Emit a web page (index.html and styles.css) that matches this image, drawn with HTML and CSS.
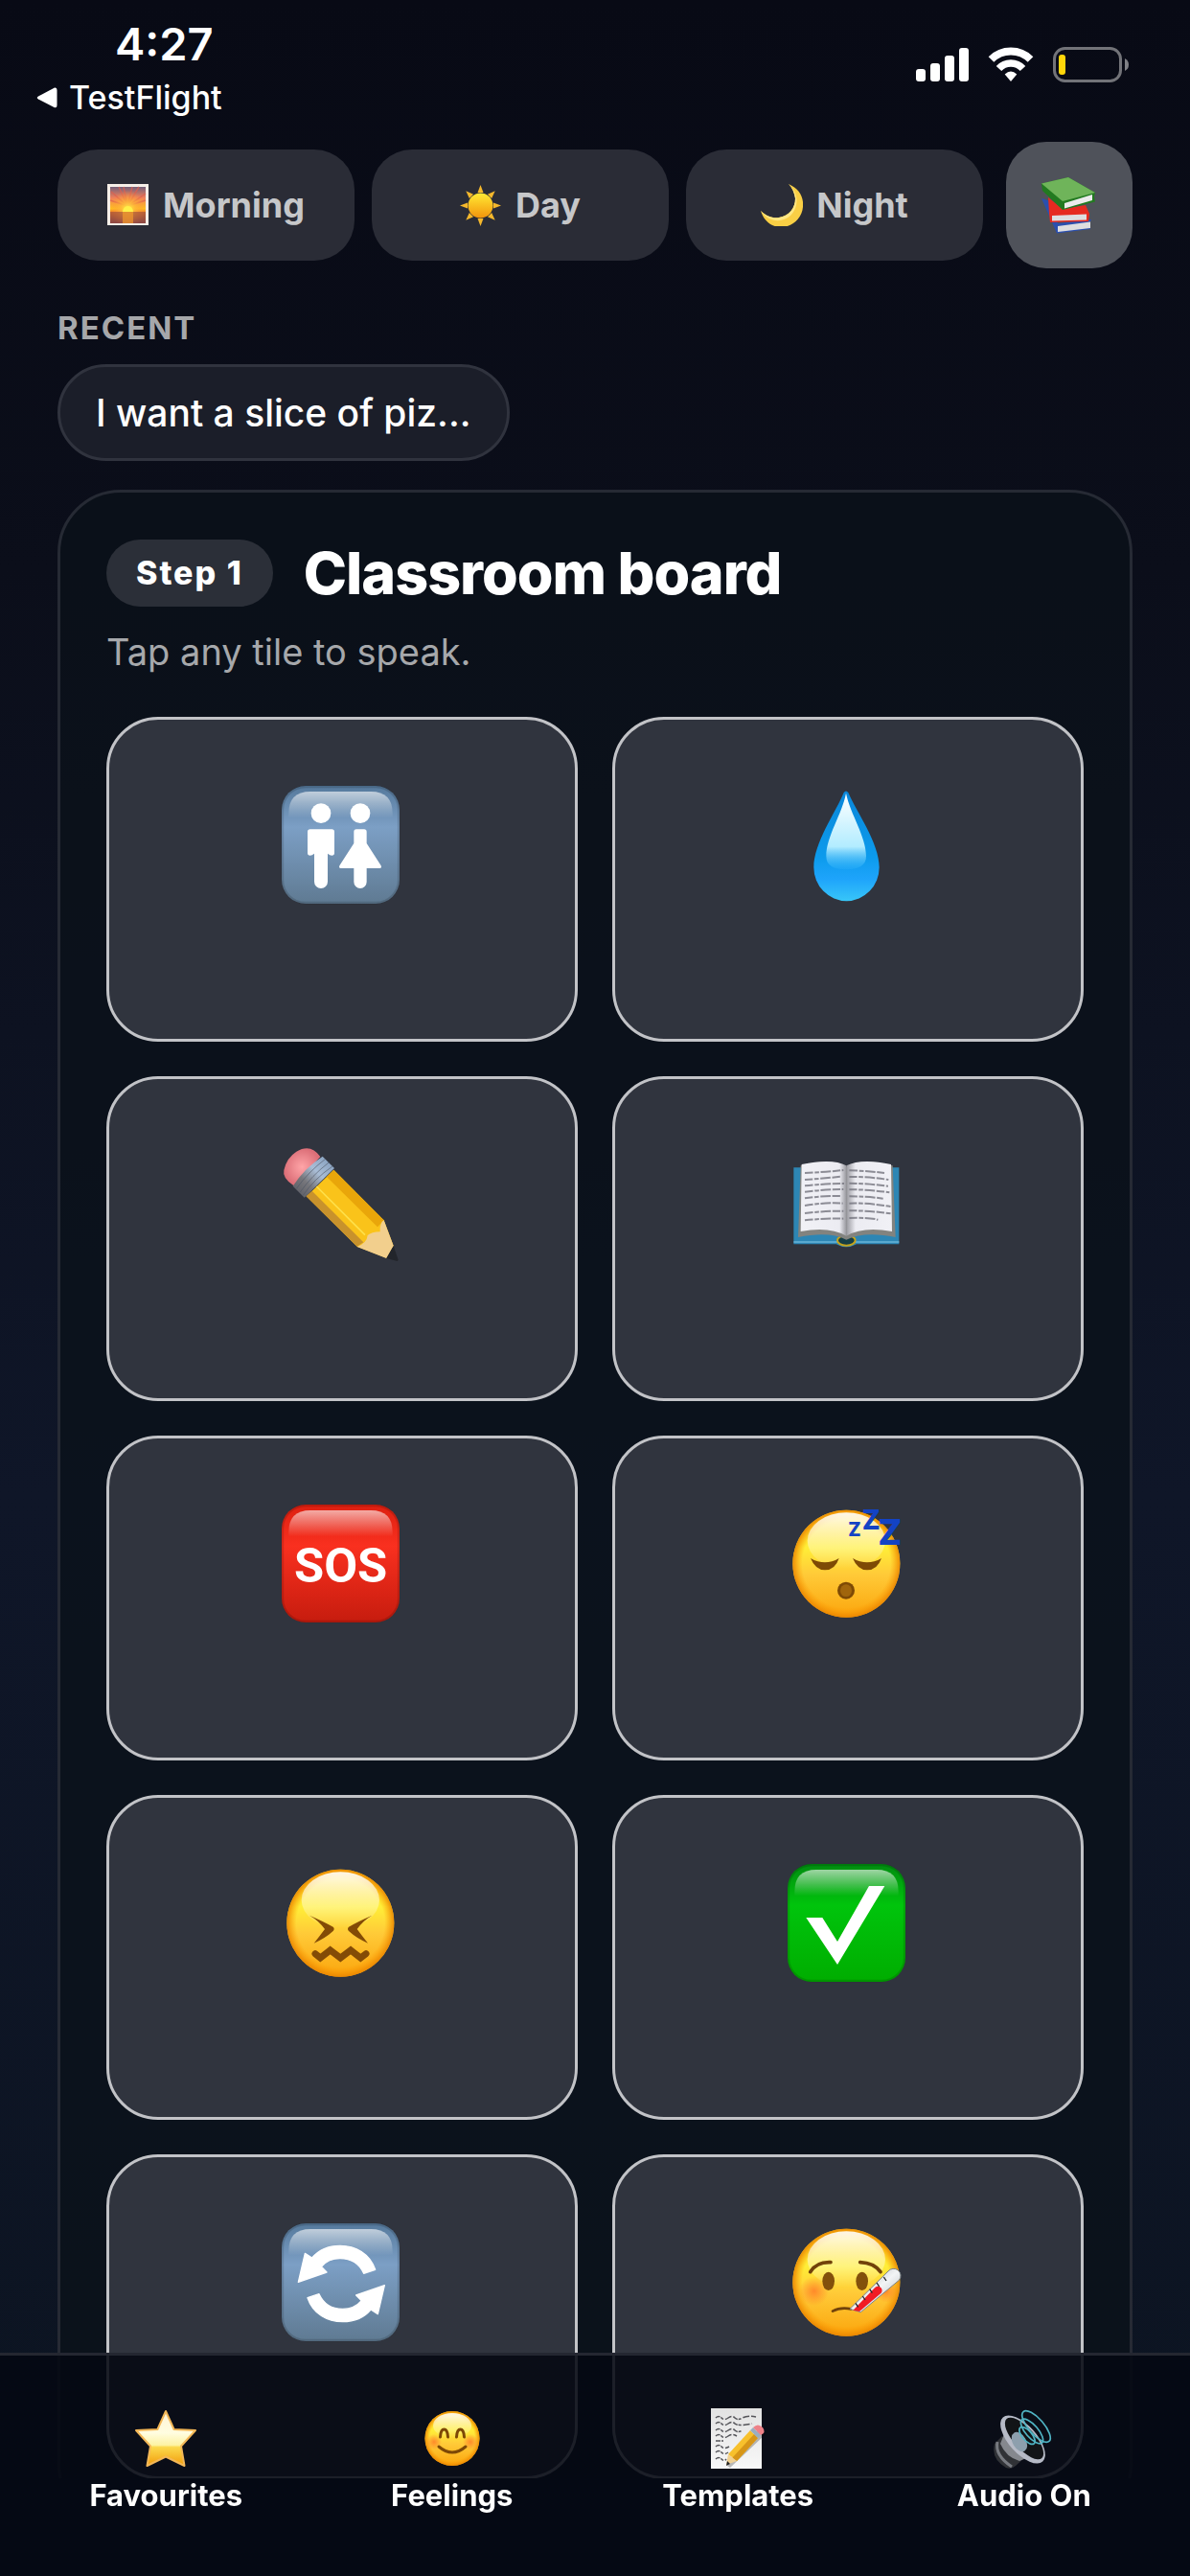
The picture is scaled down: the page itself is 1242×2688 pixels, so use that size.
FILE: index.html
```html
<!DOCTYPE html>
<html lang="en">
<head>
<meta charset="utf-8">
<meta name="viewport" content="width=device-width, initial-scale=1">
<title>Classroom board</title>
<link rel="stylesheet" href="styles.css">
</head>
<body>
<svg class="defs" width="0" height="0" aria-hidden="true">
  <defs>
    <linearGradient id="face" x1="0" y1="0" x2="0" y2="1"><stop offset="0" stop-color="#ffd21c"/><stop offset=".35" stop-color="#ffee38"/><stop offset=".6" stop-color="#ffca38"/><stop offset="1" stop-color="#fba50c"/></linearGradient>
    <radialGradient id="rim"><stop offset=".82" stop-color="#ff9a00" stop-opacity="0"/><stop offset="1" stop-color="#e98400" stop-opacity=".9"/></radialGradient>
    <linearGradient id="shine" x1="0" y1="0" x2="0" y2="1"><stop offset="0" stop-color="#fff" stop-opacity=".9"/><stop offset="1" stop-color="#fff" stop-opacity="0"/></linearGradient>
    <linearGradient id="gloss" x1="0" y1="0" x2="0" y2="1"><stop offset="0" stop-color="#fff" stop-opacity=".62"/><stop offset="1" stop-color="#fff" stop-opacity="0"/></linearGradient>
    <linearGradient id="blue" x1="0" y1="0" x2="0" y2="1"><stop offset="0" stop-color="#55799c"/><stop offset=".35" stop-color="#7c9fc5"/><stop offset="1" stop-color="#5f7a92"/></linearGradient>
    <linearGradient id="red" x1="0" y1="0" x2="0" y2="1"><stop offset="0" stop-color="#dd1f10"/><stop offset=".35" stop-color="#f9301f"/><stop offset="1" stop-color="#c61c0e"/></linearGradient>
    <linearGradient id="green" x1="0" y1="0" x2="0" y2="1"><stop offset="0" stop-color="#008c10"/><stop offset=".35" stop-color="#00c40c"/><stop offset="1" stop-color="#00ad00"/></linearGradient>
    <linearGradient id="drop" x1="0" y1="0" x2="0" y2="1"><stop offset="0" stop-color="#0a86d8"/><stop offset=".6" stop-color="#0c9bec"/><stop offset=".8" stop-color="#1ea4fb"/><stop offset="1" stop-color="#38c6f8"/></linearGradient>
    <linearGradient id="dropShine" x1="0" y1="0" x2="0" y2="1"><stop offset="0" stop-color="#fff"/><stop offset=".7" stop-color="#b2ecff"/><stop offset="1" stop-color="#2bb2fb" stop-opacity=".3"/></linearGradient>
    <linearGradient id="metal" x1="0" y1="1" x2="1" y2="0"><stop offset="0" stop-color="#55575f"/><stop offset=".35" stop-color="#77777c"/><stop offset=".6" stop-color="#a9bdd6"/><stop offset="1" stop-color="#7d98b8"/></linearGradient>
    <radialGradient id="rubber"><stop offset="0" stop-color="#ffa5a8"/><stop offset="1" stop-color="#dc6f78"/></radialGradient>
    <linearGradient id="page" x1="0" y1="0" x2="1" y2="0"><stop offset="0" stop-color="#f1f1f6"/><stop offset=".85" stop-color="#ececf2"/><stop offset="1" stop-color="#98989e"/></linearGradient>
    <linearGradient id="pageR" x1="1" y1="0" x2="0" y2="0"><stop offset="0" stop-color="#f1f1f6"/><stop offset=".8" stop-color="#ececf2"/><stop offset="1" stop-color="#98989e"/></linearGradient>
    <linearGradient id="dawn" x1="0" y1="0" x2="0" y2="1"><stop offset="0" stop-color="#74607a"/><stop offset=".3" stop-color="#f0805a"/><stop offset=".6" stop-color="#ffc21f"/><stop offset=".68" stop-color="#f08a28"/><stop offset="1" stop-color="#734653"/></linearGradient>
    <radialGradient id="glow" cy=".6"><stop offset="0" stop-color="#fff04a"/><stop offset=".4" stop-color="#ffb83a" stop-opacity=".8"/><stop offset="1" stop-color="#ff8a3a" stop-opacity="0"/></radialGradient>
    <linearGradient id="sun" x1="0" y1="0" x2="0" y2="1"><stop offset="0" stop-color="#ffea35"/><stop offset=".4" stop-color="#fbc824"/><stop offset="1" stop-color="#f2940c"/></linearGradient>
    <linearGradient id="star" x1="0" y1="0" x2="0" y2="1"><stop offset="0" stop-color="#fff3d6"/><stop offset=".4" stop-color="#fffde0"/><stop offset=".62" stop-color="#fdf3a4"/><stop offset=".66" stop-color="#fbd94c"/><stop offset="1" stop-color="#f29c0c"/></linearGradient>
    <linearGradient id="paper" x1="0" y1="0" x2="0" y2="1"><stop offset="0" stop-color="#e2e2e2"/><stop offset="1" stop-color="#f8f8f8"/></linearGradient>
    <radialGradient id="blush"><stop offset="0" stop-color="#ff7425" stop-opacity=".75"/><stop offset="1" stop-color="#ff7425" stop-opacity="0"/></radialGradient>
    <linearGradient id="thermo" x1="0" y1="0" x2="1" y2="1"><stop offset="0" stop-color="#9aa0a6"/><stop offset=".5" stop-color="#f2f4f6"/><stop offset="1" stop-color="#a9afb4"/></linearGradient>
    <symbol id="head" viewBox="0 0 396 396">
      <circle cx="193" cy="197" r="168" fill="url(#face)"/><circle cx="193" cy="197" r="168" fill="url(#rim)"/>
      <ellipse cx="193" cy="125" rx="122" ry="88" fill="url(#shine)"/>
    </symbol>
    <symbol id="gloss-key" viewBox="0 0 396 396">
      <rect x="12" y="15" width="363" height="363" rx="72" fill="none" stroke="#000" stroke-opacity=".14" stroke-width="7"/>
      <path d="M31 112V98Q31 30 99 30H288Q356 30 356 98V112Z" fill="url(#gloss)"/>
    </symbol>
  </defs>
</svg>

<div class="screen">
  <header class="status">
    <div class="status-left">
      <time class="clock">4:27</time>
      <a class="back" href="#">
        <svg width="22" height="22" viewBox="0 0 22 22" aria-hidden="true"><path d="M2 9.500 19 .6Q21.500 0 21.500 3V19Q21.500 22 19 21.200L2 12.500Q-.5 11 2 9.500Z" fill="#fff"/></svg>
        TestFlight
      </a>
    </div>
    <div class="status-icons" aria-hidden="true">
      <svg width="56" height="38" viewBox="0 0 56 38" fill="#fff"><rect x="1" y="23" width="10" height="13" rx="3"/><rect x="16" y="17" width="10" height="19" rx="3"/><rect x="31" y="9" width="10" height="27" rx="3"/><rect x="46" y="1" width="10" height="35" rx="3"/></svg>
      <svg width="48" height="38" viewBox="0 0 48 38" fill="none" stroke="#fff" stroke-width="8"><path d="M3.500 13A29 29 0 0 1 44.500 13"/><path d="M11.500 22.500A17 17 0 0 1 36.500 22.500" stroke-width="7.500"/><path d="M17.700 28.500Q24 22.500 30.300 28.500L24 36Z" fill="#fff" stroke="none"/></svg>
      <svg width="80" height="38" viewBox="0 0 80 38"><rect x="1.500" y="1.500" width="69" height="34" rx="11" fill="none" stroke="#727378" stroke-width="3"/><path d="M75 12Q79 14 79 18.500T75 25Z" fill="#808186"/><rect x="6" y="8" width="7" height="21" rx="3" fill="#ffd60a"/></svg>
    </div>
  </header>

  <main class="scroll">
    <div class="modes">
      <button class="mode" type="button">
        <svg width="44" height="44" viewBox="0 0 44 44" aria-hidden="true"><rect width="43" height="43" fill="#f6efe8"/><rect x="3" y="3" width="37" height="38" fill="url(#dawn)"/><g stroke="#e0604e" stroke-width="1.500" opacity=".7"><path d="M21 23 4 8M21 23 12 3M21 23 17 3M21 23 26 3M21 23 33 3M21 23 40 10M21 23 3 17M21 23 40 17"/></g><rect x="3" y="3" width="37" height="38" fill="url(#glow)"/><path d="M3 29H40V41H3Z" fill="#9c4a3c" opacity=".6"/><path d="M16 29H27V41H16Z" fill="#f29a2c" opacity=".7"/><path d="M16 29a5.500 6 0 0 1 11 0Z" fill="#fff04a"/></svg>
        Morning
      </button>
      <button class="mode" type="button">
        <svg width="44" height="44" viewBox="0 0 44 44" aria-hidden="true"><g fill="#f5b82c"><path d="M21.500 1 24.500 9H18.500Z"/><path d="M21.500 1 24.500 9H18.500Z" transform="rotate(45 21.500 22.500)"/><path d="M21.500 1 24.500 9H18.500Z" transform="rotate(90 21.500 22.500)"/><path d="M21.500 1 24.500 9H18.500Z" transform="rotate(135 21.500 22.500)"/><path d="M21.500 1 24.500 9H18.500Z" transform="rotate(180 21.500 22.500)"/><path d="M21.500 1 24.500 9H18.500Z" transform="rotate(225 21.500 22.500)"/><path d="M21.500 1 24.500 9H18.500Z" transform="rotate(270 21.500 22.500)"/><path d="M21.500 1 24.500 9H18.500Z" transform="rotate(315 21.500 22.500)"/></g><circle cx="21.500" cy="22.500" r="13" fill="url(#sun)"/></svg>
        Day
      </button>
      <button class="mode" type="button">
        <svg width="44" height="44" viewBox="0 0 44 44" aria-hidden="true"><path d="M29 0C40 5 45 13 44 24 43 36 33 45 21 45 11 45 3 38 0 28 6 34 13 36 19 35 30 33 36 25 36 15 35 9 33 4 29 0Z" fill="#f9cf45"/><path d="M29 0C40 10 40 24 31 33 22 41 8 40 0 28 6 34 13 36 19 35 30 33 36 25 36 15 35 9 33 4 29 0Z" fill="#ffe784"/></svg>
        Night
      </button>
      <button class="library" type="button" aria-label="Classroom">
        <svg width="66" height="66" viewBox="0 0 66 66" aria-hidden="true"><path d="M4 26 11 28 21 52 56 48 54 52 55 58 20 62.500Z" fill="#2b4fae"/><path d="M21 55 55 50.500V57L21 61Z" fill="#dedee0"/><path d="M11 25 26 37 50 33 54 42 53 50 13 51 12 42Z" fill="#e62a20"/><path d="M15 44 51 42.500V48.500L15 49.500Z" fill="#dedee0"/><path d="M4 10.500 32 4 60 20 59 24 60 29.500 26 38 5 18Z" fill="#227a20"/><path d="M28 31 57 22V28L28 36.500Z" fill="#ececec"/><path d="M4 10.500 32 4 60 20 26 29Z" fill="#6fb45a"/></svg>
      </button>
    </div>

    <h2 class="section-label">RECENT</h2>
    <button class="chip" type="button">I want a slice of piz...</button>

    <section class="card">
      <div class="card-head">
        <span class="step">Step 1</span>
        <h1 class="title">Classroom board</h1>
      </div>
      <p class="hint">Tap any tile to speak.</p>
      <div class="grid">
        <button class="tile" type="button" aria-label="Toilet">
          <svg viewBox="0 0 396 396"><rect x="9" y="12" width="369" height="369" rx="75" fill="url(#blue)"/><use href="#gloss-key"/><g fill="#fff"><circle cx="132" cy="98" r="31"/><circle cx="255" cy="98" r="31"/><path d="M98 148H166Q174 148 174 156V222Q174 230 166 230 160 230 153 224V312A21 21 0 0 1 111 312V224Q104 230 98 230 90 230 90 222V156Q90 148 98 148Z"/><path d="M243 148H267Q275 148 275 156V192L320 262Q323 270 316 270H275V313A20 20 0 0 1 235 313V270H194Q187 270 190 262L235 192V156Q235 148 243 148Z"/></g></svg>
        </button>
        <button class="tile" type="button" aria-label="Water">
          <svg viewBox="0 0 396 396"><path d="M185 33Q192 24 199 33C225 95 296 190 296 267A102 105 0 0 1 91 267C91 190 160 95 185 33Z" fill="url(#drop)"/><path d="M192 35C205 100 255 170 255 232 255 262 232 274 192 274 152 274 130 262 130 232 130 170 180 100 192 35Z" fill="url(#dropShine)"/></svg>
        </button>
        <button class="tile" type="button" aria-label="Pencil">
          <svg viewBox="0 0 396 396"><path d="M47 139Q10 115 16 90 24 52 55 32 100 5 130 48Z" fill="url(#rubber)"/><path d="M172 89 329 247 359 327 337 365 245 329 87 172Z" fill="#fac31a"/><path d="M172 89 329 247 309 268 150 111Z" fill="#e9a60a"/><path d="M104 155 265 316 245 329 85 172Z" fill="#c8922c"/><path d="M118 141 270 293" stroke="#ffe04a" stroke-width="5"/><path d="M329 247Q316 254 317 283 290 284 278 294 276 318 245 330L337 366 359 327Z" fill="#f2cf8d"/><path d="M359 327 374 371 371 375 337 366Z" fill="#22252b"/><path d="M137 47 174 84 80 176 44 140Q80 84 137 47Z" fill="url(#metal)"/><path d="M55 148Q92 96 146 55M66 160Q104 106 158 65M75 170Q110 118 168 78" fill="none" stroke="#4c5564" stroke-width="3" opacity=".6"/></svg>
        </button>
        <button class="tile" type="button" aria-label="Book">
          <svg viewBox="0 0 396 396"><path d="M28 82H358V322H225Q193 340 161 322H28Z" fill="#2d86b4"/><path d="M28 315H165M220 315H358" stroke="#68b5d8" stroke-width="5"/><ellipse cx="193" cy="310" rx="28" ry="16" fill="#163f46" stroke="#c5a41c" stroke-width="6"/><path d="M50 76Q140 50 193 80 245 50 338 76L347 300Q250 280 193 308 140 280 42 300Z" fill="#82837f"/><path d="M53 72Q150 52 193 76V296Q140 265 50 282Z" fill="url(#page)"/><path d="M333 72Q240 52 193 76V296Q245 265 336 282Z" fill="url(#pageR)"/><g fill="none" stroke="#73737d" stroke-width="6" stroke-dasharray="25 5 14 5 32 5" opacity=".8"><path d="M63 99Q130 96 184 90M63 120Q120 116 178 110M63 139Q130 132 186 132M63 158Q130 150 184 150M63 178Q120 170 176 171M63 201Q130 190 182 194M63 225Q130 217 184 218M63 247Q130 240 184 242M202 91Q260 92 312 99M202 111Q260 110 325 120M202 131Q260 132 324 140M202 151Q260 150 328 160M202 172Q260 172 308 179M202 194Q260 192 333 204M202 217Q260 216 332 226M202 240Q260 238 292 245"/></g></svg>
        </button>
        <button class="tile" type="button" aria-label="Help">
          <svg viewBox="0 0 396 396"><rect x="9" y="12" width="369" height="369" rx="75" fill="url(#red)"/><use href="#gloss-key"/><text class="sos" x="194" y="254">SOS</text></svg>
        </button>
        <button class="tile" type="button" aria-label="Tired">
          <svg viewBox="0 0 396 396"><use href="#head"/><g fill="#7e4a05"><path d="M81 180Q126 206 170 180 158 217 126 217 96 217 81 180Z"/><path d="M213 180Q258 206 303 180 290 217 258 217 228 217 213 180Z"/><ellipse cx="192" cy="281" rx="27" ry="27"/></g><ellipse cx="192" cy="281" rx="18" ry="19" fill="#a0650c"/><g class="zzz"><text class="z-small" x="199" y="110">Z</text><text class="z-mid" x="242" y="90">Z</text><text class="z-big" x="292" y="138">Z</text></g></svg>
        </button>
        <button class="tile" type="button" aria-label="Upset">
          <svg viewBox="0 0 396 396"><use href="#head"/><g fill="#834b06"><path d="M96 173Q142 193 170 209 176 215 170 222 145 245 110 260 130 235 144 216 126 190 96 173Z"/><path d="M292 173Q246 193 219 209 213 215 219 222 244 245 279 260 259 235 245 216 263 190 292 173Z"/></g><path d="M114 293 130 306 161 282 193 306 225 282 256 306 273 293" fill="none" stroke="#834b06" stroke-width="21" stroke-linecap="round"/></svg>
        </button>
        <button class="tile" type="button" aria-label="Yes">
          <svg viewBox="0 0 396 396"><rect x="9" y="12" width="369" height="369" rx="75" fill="url(#green)"/><use href="#gloss-key"/><path d="M67 180H118L165 255 264 81H313L165 327Z" fill="#fff"/></svg>
        </button>
        <button class="tile" type="button" aria-label="Again">
          <svg viewBox="0 0 396 396"><rect x="9" y="12" width="369" height="369" rx="75" fill="url(#blue)"/><use href="#gloss-key"/><g fill="#fff" stroke="#fff" stroke-width="4" stroke-linejoin="round"><path d="M302 157C285 107 240 82 192 82 155 82 125 95 104 120L82 106 61 196 150 165 133 148C148 130 168 122 192 122 225 122 252 138 266 169Z"/><path d="M302 157C285 107 240 82 192 82 155 82 125 95 104 120L82 106 61 196 150 165 133 148C148 130 168 122 192 122 225 122 252 138 266 169Z" transform="rotate(180 196 201)"/></g></svg>
        </button>
        <button class="tile" type="button" aria-label="Sick">
          <svg viewBox="0 0 396 396"><use href="#head"/><circle cx="92" cy="224" r="46" fill="url(#blush)"/><circle cx="318" cy="224" r="36" fill="url(#blush)"/><g fill="none" stroke="#71420a" stroke-width="11" stroke-linecap="round"><path d="M80 164Q100 132 144 134M236 134Q280 136 300 164"/><path d="M150 287Q175 273 208 280" stroke-width="8"/></g><g fill="#83500b"><ellipse cx="137" cy="193" rx="19" ry="29"/><ellipse cx="242" cy="193" rx="19" ry="29"/></g><path d="M204 280 324 162A20 20 0 0 1 358 190L238 290Z" fill="url(#thermo)" stroke="#7d8489" stroke-width="3"/><path d="M214 284 282 214A12 12 0 0 1 302 230L234 288Z" fill="#f11c25"/><path d="M310 180 318 192M288 198 296 210M266 218 274 230M244 240 252 252M222 262 230 274" stroke="#25282b" stroke-width="4"/></svg>
        </button>
      </div>
    </section>
  </main>

  <nav class="tabbar" aria-label="Main">
    <a class="tab" href="#">
      <svg viewBox="0 0 66 66" aria-hidden="true"><path d="M33 4 41.600 23 64 24 49 40.500 52.500 61 33 51.500 13.500 61 17 40.500 2 24 24.400 23Z" fill="url(#star)" stroke="#f3b757" stroke-width="2" stroke-linejoin="round"/></svg>
      Favourites
    </a>
    <a class="tab" href="#">
      <svg viewBox="0 0 66 66" aria-hidden="true"><circle cx="33" cy="32.500" r="28.500" fill="url(#face)"/><circle cx="33" cy="32.500" r="28.500" fill="url(#rim)"/><ellipse cx="33" cy="19" rx="20" ry="13" fill="url(#shine)"/><circle cx="14" cy="36" r="8" fill="url(#blush)"/><circle cx="52" cy="36" r="8" fill="url(#blush)"/><g fill="none" stroke="#7d4806" stroke-width="3" stroke-linecap="round"><path d="M20.500 31Q21 23 24.500 23T28.500 31M37.500 31Q38 23 41.500 23T45.500 31"/><path d="M19 41Q33 53 47 41"/></g></svg>
      Feelings
    </a>
    <a class="tab" href="#">
      <svg viewBox="0 0 66 66" aria-hidden="true"><path d="M5 1H58V64H5Z" fill="url(#paper)"/><g fill="none" stroke="#55555a" stroke-width="1.500" stroke-dasharray="5 1 3 2 7 2"><path d="M10 11q3-3 6 0t7 0 7 0 8 0 14-1M10 17q3-3 6 0t7 0 7 0 18 0M10 24q3-3 6 0t7 0 7 0 8 0M10 30q3-3 6 0t7 0 9 0M10 35h8M10 41q3-3 6 0t8 0M10 47q3-3 6 0t7 0M10 54q3-3 6 0t5 0"/></g><path d="M22 61 25 63 62 28 56 22Z" fill="#000" opacity=".25"/><path d="M23 49 46 24 54 32 32 56Z" fill="#f7c02c"/><path d="M27 53 50 28 54 32 32 56Z" fill="#d79618"/><path d="M23 49 21 60 32 56Z" fill="#f1d193"/><path d="M22 56 21 61 25 59Z" fill="#222"/><path d="M46 24 49 21 57 29 54 32Z" fill="#9aaec0"/><path d="M49 21Q54 16 59 21 63 26 57 29Z" fill="#ee8188"/></svg>
      Templates
    </a>
    <a class="tab" href="#">
      <svg viewBox="0 0 66 66" aria-hidden="true"><path d="M10 30 2 38Q-2 54 14 63 20 65 24 61L34 52Z" fill="#303236"/><path d="M5 36Q2 50 20 62" fill="none" stroke="#777a80" stroke-width="3"/><path d="M12 28 8 38Q14 52 28 56L42 50Z" fill="#85888e"/><ellipse cx="31.500" cy="33.500" rx="31" ry="14.500" transform="rotate(48 31.500 33.500)" fill="#b6bac6"/><ellipse cx="33" cy="32.500" rx="27.500" ry="11" transform="rotate(48 33 32.500)" fill="#121417"/><ellipse cx="28" cy="36" rx="11" ry="7" transform="rotate(60 28 36)" fill="#8d9fad"/><g fill="none" stroke="#50b4c4" stroke-width="1.700"><ellipse cx="45.500" cy="20" rx="20.500" ry="8" transform="rotate(49 45.500 20)"/><ellipse cx="41" cy="25" rx="16" ry="6.500" transform="rotate(49 41 25)"/><ellipse cx="36" cy="29.500" rx="11" ry="5" transform="rotate(49 36 29.500)"/></g></svg>
      Audio On
    </a>
  </nav>
</div>
</body>
</html>
```
FILE: styles.css
```css
* { box-sizing: border-box; }

body {
  margin: 0;
  color: #fff;
  font-family: Inter, "Liberation Sans", sans-serif;
  background: #080a15;
}

button {
  margin: 0;
  padding: 0;
  border: 0;
  color: inherit;
  font: inherit;
}

a { color: inherit; text-decoration: none; }
svg { display: block; flex: none; }
h1, h2, p { margin: 0; }
.defs { position: absolute; }

.screen {
  display: flex;
  flex-direction: column;
  height: 100vh;
  padding-bottom: 102px;
  background: linear-gradient(180deg, #080a15 0%, #0b0e1a 22%, #0f1628 58%, #0c1421 100%);
}

/* Status bar */
.status {
  display: flex;
  justify-content: space-between;
  align-items: flex-start;
  padding: 16px 63px 26px 38px;
}
.clock {
  display: block;
  padding-left: 82px;
  font-size: 47px;
  font-weight: 600;
  line-height: 60px;
}
.back {
  display: flex;
  align-items: center;
  gap: 12px;
  margin-top: 6px;
  font-size: 34px;
  font-weight: 500;
  line-height: 40px;
}
.status-icons { display: flex; gap: 20px; padding-top: 33px; }

/* Scrolling content */
.scroll {
  flex: 1;
  min-height: 0;
  padding: 0 60px;
  overflow-y: auto;
  scrollbar-width: none;
}

.modes { display: flex; align-items: center; gap: 18px; }
.mode {
  display: flex;
  flex: 1;
  align-items: center;
  justify-content: center;
  gap: 14px;
  height: 116px;
  border-radius: 42px;
  background: #2a2c36;
  color: #c6c7c9;
  font-size: 36px;
  font-weight: 700;
}
.library {
  display: grid;
  place-items: center;
  width: 132px;
  height: 132px;
  margin-left: 6px;
  border-radius: 42px;
  background: #4f525a;
}

.section-label {
  margin-top: 42px;
  color: #a6a7aa;
  font-size: 33px;
  font-weight: 700;
  line-height: 40px;
  letter-spacing: 2px;
}
.chip {
  display: block;
  margin-top: 18px;
  padding: 0 37px;
  border: 3px solid #30333e;
  border-radius: 51px;
  background: #1b1e29;
  font-size: 39px;
  font-weight: 500;
  line-height: 95px;
}

.card {
  margin-top: 30px;
  padding: 48px;
  border: 3px solid #262a34;
  border-radius: 66px;
  background: rgba(11, 18, 26, 0.75);
}
.card-head { display: flex; align-items: center; gap: 32px; }
.step {
  padding: 0 31px;
  border-radius: 35px;
  background: #2b2f38;
  font-size: 34px;
  font-weight: 800;
  line-height: 70px;
  letter-spacing: 2px;
}
.title {
  font-size: 61px;
  font-weight: 800;
  line-height: 72px;
  letter-spacing: -1px;
}
.hint {
  margin: 22px 0 44px;
  color: #a6a8ab;
  font-size: 38px;
  line-height: 48px;
}

.grid {
  display: grid;
  grid-template-columns: 1fr 1fr;
  gap: 36px;
}
.tile {
  display: flex;
  justify-content: center;
  align-items: flex-start;
  height: 339px;
  padding-top: 65px;
  border: 3px solid #c2c3c7;
  border-radius: 54px;
  background: #30343e;
}
.tile svg { width: 132px; height: 132px; }

.sos {
  fill: #fff;
  font-family: Roboto, sans-serif;
  font-size: 152px;
  font-weight: 700;
  text-anchor: middle;
}
.zzz { fill: #1343c4; font-weight: 800; }
.z-small { font-size: 59px; }
.z-mid { font-size: 84px; }
.z-big { font-size: 111px; }

/* Tab bar */
.tabbar {
  position: fixed;
  right: 0;
  bottom: 0;
  left: 0;
  display: grid;
  grid-template-columns: repeat(4, 1fr);
  height: 233px;
  padding: 54px 24px 0;
  border-top: 3px solid #242731;
  background: rgba(5, 8, 18, 0.88);
}
.tab {
  display: flex;
  flex-direction: column;
  align-items: center;
  gap: 6px;
  font-size: 31px;
  font-weight: 700;
  line-height: 40px;
}
.tab svg { width: 66px; height: 66px; }
```
